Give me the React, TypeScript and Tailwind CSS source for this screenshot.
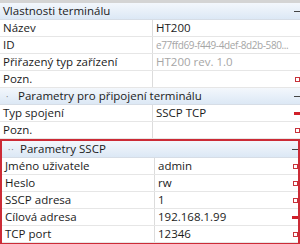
import React from 'react'

type Row = {
  label: string
  value?: string
  muted?: boolean
  tight?: boolean
  mark?: 'box' | 'bar'
}

const font = { fontFamily: '"Open Sans", "Noto Sans", sans-serif' }

function Mark({ kind }: { kind?: 'box' | 'bar' }) {
  if (kind === 'box') return <div className="w-[5px] h-[5px] border border-[#c8323a] bg-white" />
  if (kind === 'bar') return <div className="w-[6px] h-[3px] bg-[#d0202a]" />
  return null
}

function PropRow({ row }: { row: Row }) {
  return (
    <div className="flex h-[17px] border-b border-[#e6e6e6] bg-white">
      <div className="w-[153px] shrink-0 pl-[3px] flex items-center text-[#1b1b1b] border-r border-[#dcdcdc] whitespace-nowrap overflow-hidden">
        {row.label}
      </div>
      <div className="flex-1 flex items-center pl-[3px] min-w-0">
        <span
          className={
            (row.muted ? 'text-[#a6a6a6] ' : 'text-[#1b1b1b] ') +
            (row.tight ? 'text-[10px] tracking-[-0.4px] ' : '') +
            'flex-1 whitespace-nowrap'
          }
        >
          {row.value}
        </span>
        <div className="w-[6px] flex justify-end shrink-0">
          <Mark kind={row.mark} />
        </div>
      </div>
    </div>
  )
}

function Header({ dots, title }: { dots: string; title: string }) {
  return (
    <div className="flex h-[17px] items-center border-b border-[#d6dde6] bg-gradient-to-b from-[#f3f7fc] to-[#dce8f5] text-[#1b1b1b]">
      {dots && <span className="pl-[6px] w-[17px] text-[#777] text-[9px] tracking-[1px]">{dots}</span>}
      <span className={dots ? 'flex-1 pl-[1px] whitespace-nowrap' : 'flex-1 pl-[3px]'}>{title}</span>
      <span className="w-[6px] h-[1px] bg-[#444] shrink-0" />
    </div>
  )
}

export default function App() {
  const general: Row[] = [
    { label: 'Název', value: 'HT200' },
    { label: 'ID', value: 'e77ffd69-f449-4def-8d2b-580...', muted: true, tight: true },
    { label: 'Přiřazený typ zařízení', value: 'HT200 rev. 1.0', muted: true },
    { label: 'Pozn.', value: '', mark: 'box' },
  ]
  const conn: Row[] = [
    { label: 'Typ spojení', value: 'SSCP TCP', mark: 'bar' },
    { label: 'Pozn.', value: '', mark: 'box' },
  ]
  const sscp: Row[] = [
    { label: 'Jméno uživatele', value: 'admin', mark: 'box' },
    { label: 'Heslo', value: 'rw', mark: 'box' },
    { label: 'SSCP adresa', value: '1', mark: 'box' },
    { label: 'Cílová adresa', value: '192.168.1.99', mark: 'bar' },
    { label: 'TCP port', value: '12346', mark: 'box' },
  ]

  return (
    <div className="w-[300px] h-[244px] overflow-hidden bg-white text-[11.5px] leading-none" style={font}>
      <div className="h-[3px] bg-[#d4d4d4]" />
      <Header dots="" title="Vlastnosti terminálu" />
      {general.map((r, i) => (
        <PropRow key={i} row={r} />
      ))}
      <Header dots="·" title="Parametry pro připojení terminálu" />
      {conn.map((r, i) => (
        <PropRow key={i} row={r} />
      ))}
      <div className="border-2 border-[#cc2b36]">
        <Header dots="··" title="Parametry SSCP" />
        {sscp.map((r, i) => (
          <PropRow key={i} row={r} />
        ))}
      </div>
    </div>
  )
}
